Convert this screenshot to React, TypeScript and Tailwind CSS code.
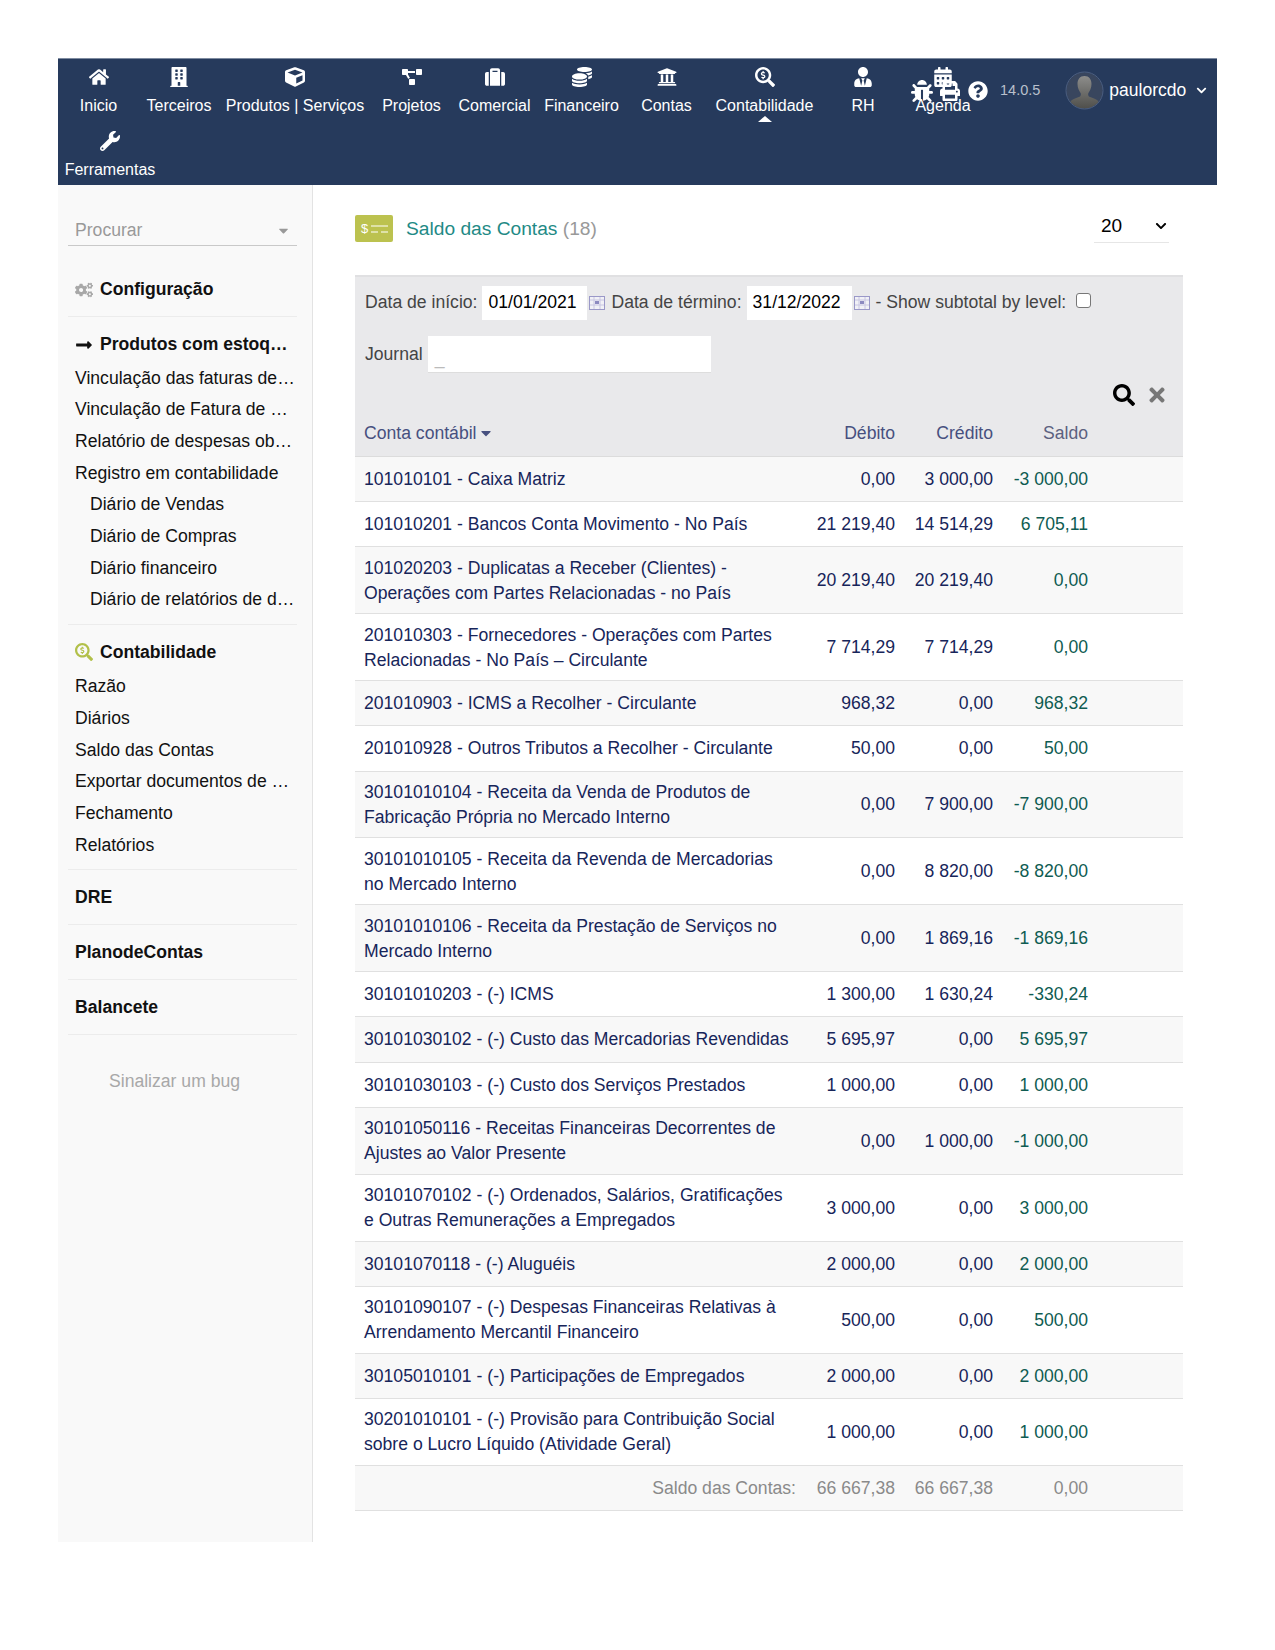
import React from 'react';
import {
  FaHome, FaBuilding, FaCube, FaProjectDiagram, FaSuitcase, FaCoins, FaUniversity, FaSearchDollar,
  FaUserTie, FaCalendarAlt, FaBug, FaPrint, FaQuestionCircle, FaWrench, FaSearch, FaTimes, FaCogs,
  FaLongArrowAltRight, FaCaretDown, FaChevronDown,
} from 'react-icons/fa';

const navItems = [
  { label: 'Inicio', icon: FaHome, width: 'w-[81px]' },
  { label: 'Terceiros', icon: FaBuilding, width: 'w-[80px]' },
  { label: 'Produtos | Serviços', icon: FaCube, width: 'w-[152px]' },
  { label: 'Projetos', icon: FaProjectDiagram, width: 'w-[81px]' },
  { label: 'Comercial', icon: FaSuitcase, width: 'w-[85px]' },
  { label: 'Financeiro', icon: FaCoins, width: 'w-[89px]' },
  { label: 'Contas', icon: FaUniversity, width: 'w-[81px]' },
  { label: 'Contabilidade', icon: FaSearchDollar, width: 'w-[115px]', active: true },
  { label: 'RH', icon: FaUserTie, width: 'w-[82px]' },
  { label: 'Agenda', icon: FaCalendarAlt, width: 'w-[78px]' },
  { label: 'Ferramentas', icon: FaWrench, width: 'w-[104px]' },
];

const rows = [
  { name: '101010101 - Caixa Matriz', d: '0,00', c: '3 000,00', s: '-3 000,00' },
  { name: '101010201 - Bancos Conta Movimento - No País', d: '21 219,40', c: '14 514,29', s: '6 705,11' },
  { name: '101020203 - Duplicatas a Receber (Clientes) - Operações com Partes Relacionadas - no País', d: '20 219,40', c: '20 219,40', s: '0,00', tall: true },
  { name: '201010303 - Fornecedores - Operações com Partes Relacionadas - No País – Circulante', d: '7 714,29', c: '7 714,29', s: '0,00', tall: true },
  { name: '201010903 - ICMS a Recolher - Circulante', d: '968,32', c: '0,00', s: '968,32' },
  { name: '201010928 - Outros Tributos a Recolher - Circulante', d: '50,00', c: '0,00', s: '50,00' },
  { name: '30101010104 - Receita da Venda de Produtos de Fabricação Própria no Mercado Interno', d: '0,00', c: '7 900,00', s: '-7 900,00', tall: true },
  { name: '30101010105 - Receita da Revenda de Mercadorias no Mercado Interno', d: '0,00', c: '8 820,00', s: '-8 820,00', tall: true },
  { name: '30101010106 - Receita da Prestação de Serviços no Mercado Interno', d: '0,00', c: '1 869,16', s: '-1 869,16', tall: true },
  { name: '30101010203 - (-) ICMS', d: '1 300,00', c: '1 630,24', s: '-330,24' },
  { name: '30101030102 - (-) Custo das Mercadorias Revendidas', d: '5 695,97', c: '0,00', s: '5 695,97' },
  { name: '30101030103 - (-) Custo dos Serviços Prestados', d: '1 000,00', c: '0,00', s: '1 000,00' },
  { name: '30101050116 - Receitas Financeiras Decorrentes de Ajustes ao Valor Presente', d: '0,00', c: '1 000,00', s: '-1 000,00', tall: true },
  { name: '30101070102 - (-) Ordenados, Salários, Gratificações e Outras Remunerações a Empregados', d: '3 000,00', c: '0,00', s: '3 000,00', tall: true },
  { name: '30101070118 - (-) Aluguéis', d: '2 000,00', c: '0,00', s: '2 000,00' },
  { name: '30101090107 - (-) Despesas Financeiras Relativas à Arrendamento Mercantil Financeiro', d: '500,00', c: '0,00', s: '500,00', tall: true },
  { name: '30105010101 - (-) Participações de Empregados', d: '2 000,00', c: '0,00', s: '2 000,00' },
  { name: '30201010101 - (-) Provisão para Contribuição Social sobre o Lucro Líquido (Atividade Geral)', d: '1 000,00', c: '0,00', s: '1 000,00', tall: true },
];

const gridCols = 'grid grid-cols-[448px_100px_98px_95px_1fr] items-center';

const CalendarIcon = () => (
  <svg width="16" height="14" viewBox="0 0 16 14" className="shrink-0">
    <rect x="0.5" y="0.5" width="15" height="13" fill="#f1f1f6" stroke="#9a98c8" />
    <path d="M1 4h14M1 9h14M5 1v12M11 1v12" stroke="#c8c6e2" />
    <rect x="6" y="5" width="4" height="3" fill="#8c8ac0" />
  </svg>
);

const Avatar = () => (
  <svg width="39" height="39" viewBox="0 0 39 39" className="shrink-0">
    <defs>
      <linearGradient id="head" x1="0" y1="0" x2="0" y2="1">
        <stop offset="0" stopColor="#8d8d8b" />
        <stop offset="1" stopColor="#4c4c48" />
      </linearGradient>
    </defs>
    <clipPath id="round"><circle cx="19.5" cy="19.5" r="18" /></clipPath>
    <circle cx="19.5" cy="19.5" r="18" fill="#39465e" />
    <g clipPath="url(#round)">
      <path d="M19.5 5c4.6 0 7 3.4 7 8 0 3.8-1.6 7-3.2 9.2-.6 2.4.4 3.4 3.2 4.4 3.5 1.2 6.5 2.4 7.5 5V39H5v-7.4c1-2.6 4-3.8 7.5-5 2.8-1 3.8-2 3.2-4.4-1.6-2.200-3.200-5.400-3.200-9.200 0-4.600 2.400-8 7-8z" fill="url(#head)" />
    </g>
    <circle cx="19.5" cy="19.5" r="18.5" fill="none" stroke="#4d5f80" />
  </svg>
);

const SideItem = ({ children, sub }: { children: React.ReactNode; sub?: boolean }) => (
  <div className={`flex h-[31.7px] items-center whitespace-nowrap px-[7px] ${sub ? 'pl-[22px]' : ''}`}>{children}</div>
);

const SideHead = ({ icon, children, h }: { icon?: React.ReactNode; children: React.ReactNode; h: string }) => (
  <div className={`flex items-center whitespace-nowrap px-[7px] font-bold ${h}`}>
    {icon && <span className="flex w-[25px] shrink-0 items-center">{icon}</span>}
    {children}
  </div>
);

const Sidebar = () => (
  <aside className="w-[255px] shrink-0 border-r border-[#e3e3e3] bg-[#f9f9f9] pl-[10px] pr-[15px] pt-[30px] text-[17.6px] text-[#111]">
    <div className="flex h-[31px] items-center justify-between border-b border-[#c9c9c9] pl-[7px] pr-[6px] text-[#999]">
      <span>Procurar</span>
      <FaCaretDown size={15} className="text-[#999]" />
    </div>

    <div className="border-b border-[#ececec] pb-[11px] pt-[28px]">
      <SideHead h="h-[31px]" icon={<FaCogs size={18} className="text-[#a8a8a8]" />}>Configuração</SideHead>
    </div>

    <div className="border-b border-[#ececec] pb-[8px] pt-[10px]">
      <SideHead h="h-[35px]" icon={<FaLongArrowAltRight size={18} className="text-[#111]" />}>Produtos com estoq…</SideHead>
      <SideItem>Vinculação das faturas de…</SideItem>
      <SideItem>Vinculação de Fatura de …</SideItem>
      <SideItem>Relatório de despesas ob…</SideItem>
      <SideItem>Registro em contabilidade</SideItem>
      <SideItem sub>Diário de Vendas</SideItem>
      <SideItem sub>Diário de Compras</SideItem>
      <SideItem sub>Diário financeiro</SideItem>
      <SideItem sub>Diário de relatórios de d…</SideItem>
    </div>

    <div className="border-b border-[#ececec] pb-[8px] pt-[9px]">
      <SideHead h="h-[37px]" icon={<FaSearchDollar size={18} className="text-[#b2c04a]" />}>Contabilidade</SideHead>
      <SideItem>Razão</SideItem>
      <SideItem>Diários</SideItem>
      <SideItem>Saldo das Contas</SideItem>
      <SideItem>Exportar documentos de …</SideItem>
      <SideItem>Fechamento</SideItem>
      <SideItem>Relatórios</SideItem>
    </div>

    {['DRE', 'PlanodeContas', 'Balancete'].map((t) => (
      <div key={t} className="flex h-[55px] items-center border-b border-[#ececec] pt-[1px]">
        <SideHead h="h-[31px]">{t}</SideHead>
      </div>
    ))}

    <div className="pl-[41px] pt-[33px] text-[#a8a8a8]">Sinalizar um bug</div>
  </aside>
);

const Header = () => (
  <header className="flex h-[127px] items-start border-t border-[#7e8ba0] bg-[#263a5c] text-[16px] text-white">
    <nav className="flex w-[924px] flex-wrap">
      {navItems.map(({ label, icon: Icon, width, active }) => (
        <div key={label} className={`relative flex h-[64px] flex-col items-center whitespace-nowrap pt-[8px] ${width}`}>
          <Icon size={20} />
          <span className="mt-[8px] leading-[22px]">{label}</span>
          {active && (
            <span className="absolute bottom-[1px] h-0 w-0 border-x-[7px] border-b-[6px] border-x-transparent border-b-white" />
          )}
        </div>
      ))}
    </nav>
    <div className="relative z-10 -ml-[71px] flex h-[63px] items-center">
      <FaBug size={22} />
      <FaPrint size={20} className="ml-[7px]" />
      <FaQuestionCircle size={20} className="ml-[8px]" />
      <span className="ml-[12px] text-[14.5px] text-[#b9c0cc]">14.0.5</span>
      <span className="ml-[25px]"><Avatar /></span>
      <span className="ml-[5px] text-[17.5px]">paulorcdo</span>
      <FaChevronDown size={11} className="ml-[10px]" />
    </div>
  </header>
);

const Filters = () => (
  <div className="border-t-2 border-[#e0e0e2] bg-[#e9e9eb] text-[17.6px] text-[#444]">
    <div className="flex h-[51px] items-center pl-[10px] whitespace-nowrap">
      <span>Data de início:</span>
      <input readOnly value="01/01/2021" className="ml-[5px] h-[34px] w-[105px] bg-white px-[6px] text-black outline-none" />
      <span className="ml-[2px]"><CalendarIcon /></span>
      <span className="ml-[6px]">Data de término:</span>
      <input readOnly value="31/12/2022" className="ml-[5px] h-[34px] w-[105px] bg-white px-[6px] text-black outline-none" />
      <span className="ml-[2px]"><CalendarIcon /></span>
      <span className="ml-[6px]">- Show subtotal by level:</span>
      <input type="checkbox" readOnly className="mb-[4px] ml-[10px] h-[15px] w-[15px] appearance-none rounded-[3px] border border-[#777] bg-white" />
    </div>
    <div className="flex items-center pl-[10px] pt-[8px]">
      <span>Journal</span>
      <div className="ml-[5px] flex h-[37px] w-[283px] items-end border-b border-[#ddd] bg-white px-[7px] pb-[1px] text-[#bbb]">_</div>
    </div>
    <div className="mt-[8px] flex h-[28px] items-center justify-end gap-[11px] pr-[15px]">
      <FaSearch size={22} className="text-black" />
      <FaTimes size={22} className="text-[#777]" />
    </div>
    <div className={`${gridCols} h-[48px] border-b border-[#dcdcdc] pt-[1px] text-[#47507f]`}>
      <div className="flex items-center gap-[2px] pl-[9px]">Conta contábil <FaCaretDown size={16} /></div>
      <div className="pr-[8px] text-right">Débito</div>
      <div className="pr-[8px] text-right">Crédito</div>
      <div className="pr-[8px] text-right text-[#5c6180]">Saldo</div>
    </div>
  </div>
);

const BalanceTable = () => (
  <div className="text-[17.6px] leading-[25px]">
    {rows.map((r, i) => (
      <div
        key={r.name}
        className={`${gridCols} border-b border-[#e0e0e0] pt-[1px] text-[#17255a] ${r.tall ? 'h-[66.9px]' : 'h-[45.2px]'} ${i % 2 === 0 ? 'bg-[#f8f8f8]' : 'bg-white'}`}
      >
        <div className="pl-[9px] pr-[12px]">{r.name}</div>
        <div className="pr-[8px] text-right whitespace-nowrap">{r.d}</div>
        <div className="pr-[8px] text-right whitespace-nowrap">{r.c}</div>
        <div className="pr-[8px] text-right whitespace-nowrap text-[#0f5c52]">{r.s}</div>
      </div>
    ))}
    <div className={`${gridCols} h-[45.2px] border-b border-[#e0e0e0] bg-[#f8f8f8] pt-[1px] text-[#8a8a8a]`}>
      <div className="pr-[7px] text-right">Saldo das Contas:</div>
      <div className="pr-[8px] text-right">66 667,38</div>
      <div className="pr-[8px] text-right">66 667,38</div>
      <div className="pr-[8px] text-right">0,00</div>
    </div>
  </div>
);

export default function App() {
  return (
    <div className="min-h-[1650px] bg-white pl-[58px] pt-[58px] font-['Liberation_Sans',Arial,sans-serif]">
      <div className="w-[1159px]">
        <Header />
        <div className="flex h-[1357px]">
          <Sidebar />
          <main className="flex-1 pl-[42px] pr-[34px]">
            <div className="flex h-[90px] items-start justify-between pt-[30px]">
              <div className="flex h-[27px] items-center">
                <div className="flex h-[27px] w-[38px] items-center gap-[3px] rounded-[2px] bg-[#bcc24f] pl-[6px] text-[13px] text-white">
                  <span>$</span>
                  <svg width="17" height="10" viewBox="0 0 17 10">
                    <path d="M0 2h17M0 8h7M10 8h7" stroke="#fff" strokeWidth="1.2" />
                  </svg>
                </div>
                <span className="ml-[13px] pt-[2px] text-[19.2px] text-[#1f8a86]">
                  Saldo das Contas <span className="text-[#999]">(18)</span>
                </span>
              </div>
              <div className="mr-[14px] -mt-[3px] flex h-[31px] w-[75px] items-center justify-between border-b border-[#e6e6e6] pb-[2px] pl-[7px] pr-[2px] text-[19px] text-black">
                <span>20</span>
                <FaChevronDown size={12} />
              </div>
            </div>
            <Filters />
            <BalanceTable />
          </main>
        </div>
      </div>
    </div>
  );
}
